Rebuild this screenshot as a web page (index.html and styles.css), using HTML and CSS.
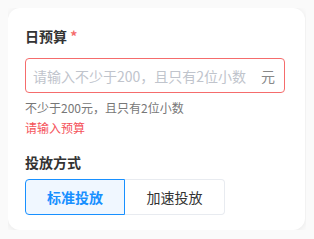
FILE: index.html
```html
<!DOCTYPE html>
<html lang="zh">
<head>
    <meta charset="UTF-8">
    <title>日预算</title>
    <link rel="stylesheet" href="styles.css">
</head>
<body>
    <div class="card">
        <div class="field">
            <div class="label">日预算 <span class="star">*</span></div>
            <div class="input-box">
                <span class="placeholder">请输入不少于200，且只有2位小数</span>
                <span class="unit">元</span>
            </div>
            <div class="help">不少于200元，且只有2位小数</div>
            <div class="error">请输入预算</div>
        </div>
        <div class="field">
            <div class="label">投放方式</div>
            <div class="seg">
                <div class="seg-btn active">标准投放</div>
                <div class="seg-btn">加速投放</div>
            </div>
        </div>
    </div>
</body>
</html>
```

FILE: styles.css
```css
body {
    margin: 8px;
    background-color: #fafafa;
    font-family: "Noto Sans CJK SC", "Noto Sans", sans-serif;
    color: #333;
}
.card {
    width: 297px;
    box-sizing: border-box;
    background-color: white;
    border-radius: 12px;
    box-shadow: 0 1px 6px rgba(0, 0, 0, 0.08);
    padding: 18px 20px 15px 17px;
}
.label {
    font-size: 14px;
    font-weight: bold;
    line-height: 20px;
    color: #333;
}
.star {
    color: #f56c6c;
    font-weight: bold;
}
.input-box {
    margin-top: 12px;
    height: 35px;
    box-sizing: border-box;
    border: 1px solid #f56c6c;
    border-radius: 4px;
    display: flex;
    align-items: center;
    justify-content: space-between;
    padding: 0 9px 0 7px;
    font-size: 14px;
}
.placeholder {
    color: #c0c4cc;
}
.unit {
    color: #888;
}
.help {
    margin-top: 6px;
    font-size: 12px;
    line-height: 18px;
    color: #777;
}
.error {
    margin-top: 2px;
    font-size: 12px;
    line-height: 18px;
    color: #f5525a;
}
.field + .field {
    margin-top: 15px;
}
.seg {
    margin-top: 7px;
    display: flex;
}
.seg-btn {
    width: 100px;
    height: 36px;
    box-sizing: border-box;
    display: flex;
    align-items: center;
    justify-content: center;
    font-size: 14px;
    border: 1px solid #e8ebf0;
    color: #333;
}
.seg-btn:first-child {
    border-radius: 4px 0 0 4px;
}
.seg-btn:last-child {
    border-left: none;
    border-radius: 0 4px 4px 0;
}
.seg-btn.active {
    border-color: #1890ff;
    background-color: #f0f7ff;
    color: #1890ff;
    font-weight: bold;
}
```
